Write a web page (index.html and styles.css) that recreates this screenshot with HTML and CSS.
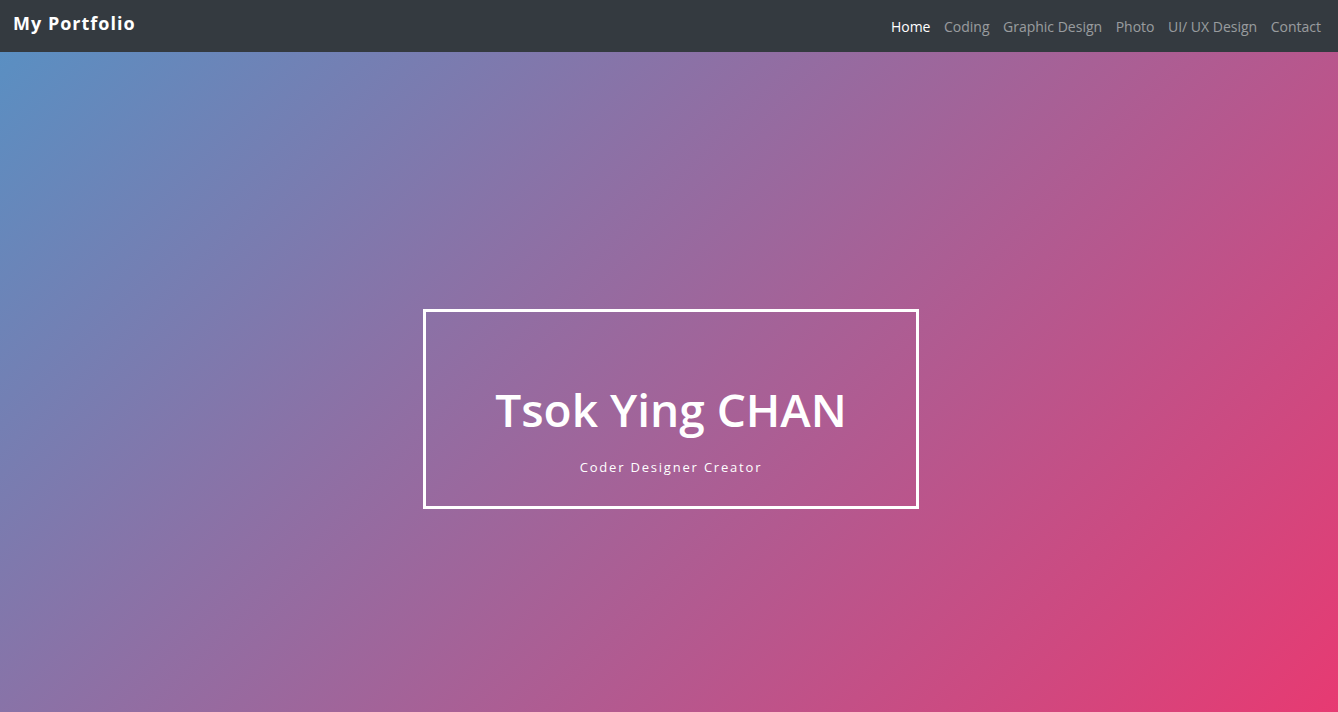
FILE: index.html
```html
<!DOCTYPE html>
<html lang="en">
<head>
<meta charset="utf-8">
<title>My Portfolio</title>
<link rel="stylesheet" href="styles.css">
</head>
<body>
<header class="navbar">
  <a class="brand" href="#">My Portfolio</a>
  <nav class="nav">
    <a class="nav-link active" href="#">Home</a>
    <a class="nav-link" href="#">Coding</a>
    <a class="nav-link" href="#">Graphic Design</a>
    <a class="nav-link" href="#">Photo</a>
    <a class="nav-link" href="#">UI/ UX Design</a>
    <a class="nav-link" href="#">Contact</a>
  </nav>
</header>
<main class="hero">
  <div class="frame">
    <h1 class="title">Tsok Ying CHAN</h1>
    <p class="subtitle">Coder Designer Creator</p>
  </div>
</main>
</body>
</html>
```
FILE: styles.css
```css
* { box-sizing: border-box; }
body {
  margin: 0;
  font-family: "Open Sans", "Noto Sans", sans-serif;
  height: 712px;
  overflow: hidden;
  display: flex;
  flex-direction: column;
}
.navbar {
  height: 52px;
  flex: none;
  background: #343a40;
  display: flex;
  align-items: center;
  justify-content: space-between;
  padding: 0 17px 0 13px;
}
.brand {
  color: #fff;
  text-decoration: none;
  font-size: 18px;
  font-weight: 700;
  letter-spacing: 1px;
  margin-top: -7px;
}
.nav {
  display: flex;
  gap: 13.5px;
  margin-top: 1px;
}
.nav-link {
  color: rgba(255,255,255,0.5);
  text-decoration: none;
  font-size: 14px;
}
.nav-link.active { color: #fff; }
.hero {
  flex: 1;
  min-height: 0;
  padding: 54px 0 0 4px;
  background: linear-gradient(135deg, #5a8fc2 0%, #e73a72 100%);
  display: flex;
  align-items: center;
  justify-content: center;
}
.frame {
  width: 496px;
  height: 200px;
  border: 3px solid #fff;
  display: flex;
  flex-direction: column;
  align-items: center;
  justify-content: flex-end;
  padding-bottom: 32px;
}
.title {
  margin: 0;
  color: #fff;
  font-size: 46px;
  font-weight: 600;
  line-height: 1;
}
.subtitle {
  margin: 29px 0 0;
  color: #fff;
  font-size: 13px;
  letter-spacing: 1.8px;
  line-height: 1;
}
```
